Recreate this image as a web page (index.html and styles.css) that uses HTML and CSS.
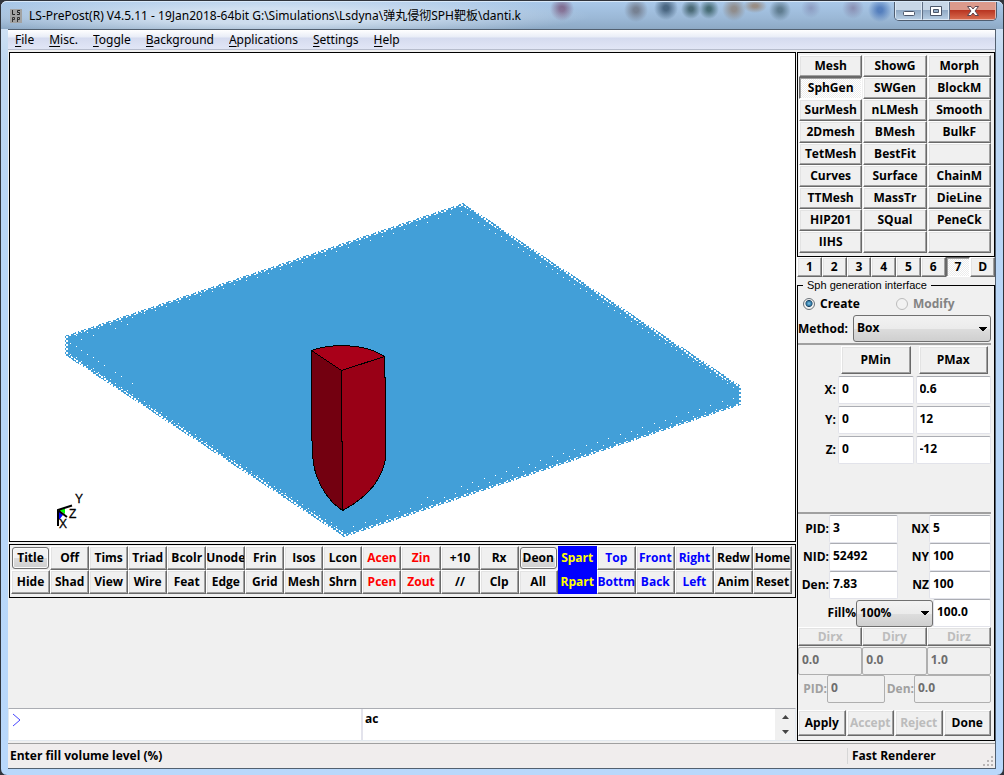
FILE: index.html
```html
<!DOCTYPE html>
<html lang="en">
<head>
<meta charset="utf-8">
<title>LS-PrePost(R) V4.5.11</title>
<link rel="stylesheet" href="styles.css">
</head>
<body>
<div class="window">
  <header class="titlebar">
    <svg class="app-icon" viewBox="0 0 12 14" aria-hidden="true">
      <rect width="12" height="14" fill="#a2a2a2"/>
      <path d="M2.500 1v4.500H5M10 1.500H7.500V3.500H9.500V5.500H7" fill="none" stroke="#222"/>
      <path d="M2.500 13V8.500h2v2h-2M7.500 13V8.500h2v2h-2" fill="none" stroke="#333"/>
    </svg>
    <h1 class="title">LS-PrePost(R) V4.5.11 - 19Jan2018-64bit G:\Simulations\Lsdyna\弹丸侵彻SPH靶板\danti.k</h1>
    <div class="window-controls">
      <button class="ctl" aria-label="Minimize"><svg width="14" height="12" viewBox="0 0 14 12"><rect x="1.500" y="6.500" width="11" height="4" rx="1" fill="#fff" stroke="#4b5669"/></svg></button>
      <button class="ctl" aria-label="Maximize"><svg width="14" height="12" viewBox="0 0 14 12"><path d="M1.500 1.500h11v9h-11zM4.500 4.500v3h5v-3z" fill="#fff" fill-rule="evenodd" stroke="#4b5669"/></svg></button>
      <button class="ctl ctl-close" aria-label="Close"><svg width="14" height="12" viewBox="0 0 14 12"><path d="M1.500 1.500h3.500l2 2.500 2-2.500h3.500L9 6l3.500 4.500H9L7 8l-2 2.500H1.500L5 6z" fill="#fff" stroke="#5d4650"/></svg></button>
    </div>
  </header>
  <div class="client">
    <nav class="menubar">
      <button><u>F</u>ile</button><button><u>M</u>isc.</button><button><u>T</u>oggle</button><button><u>B</u>ackground</button><button><u>A</u>pplications</button><button><u>S</u>ettings</button><button><u>H</u>elp</button>
    </nav>
    <main class="workspace">
      <section class="left">
        <div class="viewport">
          <svg class="scene" viewBox="10 53 785 488" preserveAspectRatio="xMidYMid slice" role="img" aria-label="Projectile above plate">
            <defs>
              <pattern id="dots" width="5" height="4" patternUnits="userSpaceOnUse" patternTransform="translate(1 2)">
                <path d="M0 0h3v2H0zM2 2h3v2H2z" fill="#429fd8"/>
              </pattern>
              <pattern id="specks" width="17" height="11" patternUnits="userSpaceOnUse">
                <path d="M2 2h1v1H2zM8 5h1v1H8zM13 9h1v1h-1z" fill="#fff"/>
              </pattern>
            </defs>
            <g shape-rendering="crispEdges">
              <path d="M463 203L741 386V405L344 537L65 355V336z" fill="url(#dots)"/>
              <path d="M463 206L738 388V404L345 534L68 354V337z" fill="#429fd8"/>
              <path d="M463 206L738 388V404L345 534L68 354V337zM463 213L72 343L344 525L732 396z" fill="url(#specks)" fill-rule="evenodd"/>
            </g>
            <g stroke="#000" stroke-linejoin="round" shape-rendering="crispEdges">
              <path d="M311.500 350.500L341.500 370.500L342.500 510.500Q326 500 317 477Q312.500 464 312.500 451L311.500 430z" fill="#730010"/>
              <path d="M384.500 356.500L341.500 370.500L342.500 510.500Q363 500 375 484Q385.500 467 385.500 457V377.500H384.500z" fill="#990016"/>
              <path d="M311.500 350.500Q324 345.500 344.500 345.500Q370 346.500 384.500 356.500L341.500 370.500z" fill="#a90019"/>
            </g>
            <path d="M59 510L65 508.500V514z" fill="#0f0"/>
            <path d="M59 511L63 515L59 520z" fill="#00f"/>
            <path d="M58 526V510L72 505.500M59 511L67 517" fill="none" stroke="#000" stroke-width="2"/>
            <g class="axis"><text x="75" y="503">Y</text><text x="69" y="518">Z</text><text x="59" y="528">X</text></g>
          </svg>
        </div>
        <div class="toolbar">
          <button class="focus">Title</button><button>Off</button><button>Tims</button><button>Triad</button><button>Bcolr</button><button>Unode</button><button>Frin</button><button>Isos</button><button>Lcon</button><button class="red">Acen</button><button class="red">Zin</button><button>+10</button><button>Rx</button><button class="focus">Deon</button><button class="part">Spart</button><button class="blue">Top</button><button class="blue">Front</button><button class="blue">Right</button><button>Redw</button><button>Home</button>
          <button>Hide</button><button>Shad</button><button>View</button><button>Wire</button><button>Feat</button><button>Edge</button><button>Grid</button><button>Mesh</button><button>Shrn</button><button class="red">Pcen</button><button class="red">Zout</button><button>//</button><button>Clp</button><button>All</button><button class="part">Rpart</button><button class="blue">Bottm</button><button class="blue">Back</button><button class="blue">Left</button><button>Anim</button><button>Reset</button>
        </div>
        <div class="console">
          <label class="prompt">
            <svg width="10" height="14" viewBox="0 0 10 14" aria-hidden="true"><path d="M1 1l7 6-7 6" fill="none" stroke="#4747ff"/></svg>
            <input aria-label="Command">
          </label>
          <textarea aria-label="Command history">ac</textarea>
          <div class="spin">
            <button aria-label="Scroll up"><svg width="7" height="4" viewBox="0 0 7 4"><path d="M0 4L3.500 0L7 4z" fill="#444"/></svg></button>
            <button aria-label="Scroll down"><svg width="7" height="4" viewBox="0 0 7 4"><path d="M0 0h7L3.500 4z" fill="#444"/></svg></button>
          </div>
        </div>
      </section>
      <aside class="right">
        <div class="pages">
          <button>Mesh</button><button>ShowG</button><button>Morph</button>
          <button class="pressed">SphGen</button><button>SWGen</button><button>BlockM</button>
          <button>SurMesh</button><button>nLMesh</button><button>Smooth</button>
          <button>2Dmesh</button><button>BMesh</button><button>BulkF</button>
          <button>TetMesh</button><button>BestFit</button><button aria-label="Empty slot"></button>
          <button>Curves</button><button>Surface</button><button>ChainM</button>
          <button>TTMesh</button><button>MassTr</button><button>DieLine</button>
          <button>HIP201</button><button>SQual</button><button>PeneCk</button>
          <button>IIHS</button><button aria-label="Empty slot"></button><button aria-label="Empty slot"></button>
        </div>
        <div class="tabs">
          <button>1</button><button>2</button><button>3</button><button>4</button><button>5</button><button>6</button><button class="pressed">7</button><button>D</button>
        </div>
        <fieldset class="panel">
          <legend>Sph generation interface</legend>
          <div class="modes">
            <label><input type="radio" name="mode" checked>Create</label>
            <label class="muted"><input type="radio" name="mode" disabled>Modify</label>
          </div>
          <div class="method">
            <label for="method">Method:</label>
            <select id="method"><option>Box</option></select>
          </div>
          <hr>
          <div class="points">
            <span></span><button>PMin</button><button>PMax</button>
            <label for="x1">X:</label><input id="x1" value="0"><input aria-label="X max" value="0.6">
            <label for="y1">Y:</label><input id="y1" value="0"><input aria-label="Y max" value="12">
            <label for="z1">Z:</label><input id="z1" value="0"><input aria-label="Z max" value="-12">
          </div>
          <hr>
          <div class="params">
            <label for="pid">PID:</label><input id="pid" value="3"><label for="nx">NX</label><input id="nx" value="5">
            <label for="nid">NID:</label><input id="nid" value="52492"><label for="ny">NY</label><input id="ny" value="100">
            <label for="den">Den:</label><input id="den" value="7.83"><label for="nz">NZ</label><input id="nz" value="100">
          </div>
          <div class="fill">
            <label for="fill">Fill%</label><select id="fill"><option>100%</option></select><input aria-label="Fill value" value="100.0">
          </div>
          <div class="dirs">
            <button disabled>Dirx</button><button disabled>Diry</button><button disabled>Dirz</button>
            <input aria-label="Dir x" value="0.0" disabled><input aria-label="Dir y" value="0.0" disabled><input aria-label="Dir z" value="1.0" disabled>
          </div>
          <div class="modify">
            <label for="mpid">PID:</label><input id="mpid" value="0" disabled><label for="mden">Den:</label><input id="mden" value="0.0" disabled>
          </div>
          <div class="actions">
            <button>Apply</button><button disabled>Accept</button><button disabled>Reject</button><button>Done</button>
          </div>
        </fieldset>
      </aside>
    </main>
    <footer class="status">
      <span>Enter fill volume level (%)</span>
      <span class="renderer">Fast Renderer</span>
      <svg class="grip" width="10" height="10" viewBox="0 0 10 10" aria-hidden="true"><path d="M8 0h2v2H8zM4 4h2v2H4zM8 4h2v2H8zM0 8h2v2H0zM4 8h2v2H4zM8 8h2v2H8z" fill="#b9b5b5"/></svg>
    </footer>
  </div>
</div>
</body>
</html>
```
FILE: styles.css
```css
* { box-sizing: border-box; }
body {
  margin: 0;
  background: #30343c;
  font: bold 12px/16px "Open Sans", "Noto Sans CJK SC", sans-serif;
  color: #000;
}
button, input, select, textarea {
  font: inherit;
  color: inherit;
  margin: 0;
  padding: 0;
  border-radius: 0;
  min-width: 0;
}
button { overflow: hidden; white-space: nowrap; }
.window {
  display: flex;
  flex-direction: column;
  min-height: 100vh;
  padding: 0 7px 6px;
  border: 1px solid #30343c;
  border-radius: 7px;
  background: linear-gradient(#dbe8f7 0, #bfd7f0 60px, #b9d6f6 200px, #b9d8fb);
}
.titlebar {
  display: flex;
  align-items: center;
  height: 28px;
  margin: 0 -7px;
  padding-left: 9px;
  border-radius: 6px 6px 0 0;
  border-top: 1px solid #d8e8f8;
  background:
    radial-gradient(ellipse 320px 22px at 270px 14px, #dfeaf6c0 35%, transparent 100%),
    radial-gradient(circle 12px at 561px 7px, #77577dcc 20%, transparent),
    radial-gradient(circle 12px at 635px 8px, #6c7280cc 20%, transparent),
    radial-gradient(circle 12px at 665px 6px, #34506acc 20%, transparent),
    radial-gradient(circle 10px at 690px 7px, #35555dcc 20%, transparent),
    radial-gradient(circle 10px at 708px 7px, #31585ccc 20%, transparent),
    radial-gradient(circle 12px at 733px 7px, #8b8078cc 20%, transparent),
    radial-gradient(ellipse 12px 7px at 754px 4px, #96806dcc 20%, transparent),
    radial-gradient(circle 11px at 779px 8px, #4f6c7dcc 20%, transparent),
    radial-gradient(circle 10px at 810px 6px, #8088b0aa, transparent),
    radial-gradient(circle 11px at 852px 6px, #7b7399aa, transparent),
    radial-gradient(circle 12px at 879px 8px, #426fb5cc 20%, transparent),
    linear-gradient(#a9c8e9, #9bb8d6 60%, #8da9c5);
}
.app-icon { width: 12px; height: 14px; margin-right: 7px; }
.title { flex: 1; margin: 0; font: 12px/16px "Noto Sans", "Noto Sans CJK SC", sans-serif; white-space: nowrap; }
.window-controls {
  display: flex;
  align-self: flex-start;
  height: 19px;
  margin-right: 6px;
  border: 1px solid #4f5d70;
  border-top: 0;
  border-radius: 0 0 5px 5px;
  overflow: hidden;
}
.ctl {
  display: flex;
  align-items: center;
  justify-content: center;
  width: 27px;
  border: 1px solid #dce8f4;
  border-top: 0;
  background: linear-gradient(#c8d7e7 45%, #91aac5 50%, #b5cce2);
}
.ctl + .ctl { border-left-color: #617086; }
.ctl-close { width: 47px; background: linear-gradient(#dc9a8c 45%, #b93622 50%, #d7694d); border-color: #e8b2a7; }
.client {
  display: flex;
  flex-direction: column;
  flex: 1;
  border: 1px solid #526070;
  border-left: 0;
  background: #f0f0f0;
}
.menubar {
  display: flex;
  gap: 15px;
  height: 20px;
  padding: 0 7px;
  border-bottom: 1px solid #b6bccc;
  background: linear-gradient(#fff, #e9edf7 7px, #d5dbef 8px, #e1e6f6);
}
.menubar button { border: 0; background: none; font: 12px/18px "Noto Sans", sans-serif; }
.menubar u { text-underline-offset: 2px; }
.workspace {
  flex: 1;
  display: grid;
  grid-template-columns: minmax(0, 1fr) 199px;
  padding: 2px 0;
}
.left { display: flex; flex-direction: column; }
.viewport {
  flex: 1;
  display: flex;
  min-height: 0;
  margin: 0 0 2px 1px;
  border: 1px solid #000;
  background: #fff;
}
.scene { flex: 1; width: 100%; height: 488px; }
.axis { font: 12px "Liberation Sans", sans-serif; fill: #000; stroke: #000; stroke-width: 0.3; }
.toolbar {
  display: grid;
  grid-template-columns: repeat(20, minmax(0, 1fr));
  grid-auto-rows: 24px;
  margin: 0 0 110px 1px;
  padding: 1px 3px 3px 1px;
  border: 1px solid #000;
}
.toolbar button, .pages button, .tabs button, .points button, .dirs button, .actions button {
  display: flex;
  align-items: center;
  justify-content: center;
  background: #f0f0f0;
  border: 1px solid;
  border-color: #fff #696969 #696969 #fff;
  box-shadow: inset -1px -1px #a0a0a0, inset 1px 1px #e3e3e3;
}
.toolbar .focus {
  margin: 1px;
  border: 1px solid #707070;
  border-radius: 3px;
  background: linear-gradient(#f2f2f2 50%, #dcdcdc 51%, #cfcfcf);
  box-shadow: inset 0 0 0 1px #fafafa;
}
.toolbar .red { color: #f00; }
.toolbar .blue { color: #00f; }
.toolbar .part { color: #ff0; background: #00f; border-color: #00f; box-shadow: none; }
.console {
  display: flex;
  height: 33px;
  border: 1px solid #e3e9ef;
  border-top-color: #abadb3;
  background: #fff;
}
.prompt { display: flex; width: 354px; padding: 4px 3px; border-right: 2px solid #e3e3ec; }
.prompt input { flex: 1; height: 20px; border: 0; outline: 0; }
.console textarea { flex: 1; padding: 2px 2px; border: 0; resize: none; overflow: hidden; outline: 0; }
.spin { display: flex; flex-direction: column; width: 20px; }
.spin button { flex: 1; display: flex; align-items: center; justify-content: center; border: 0; background: #f0f0f0; }
.right { display: flex; flex-direction: column; padding-left: 1px; }
.pages {
  display: grid;
  grid-template-columns: repeat(3, 1fr);
  grid-auto-rows: 22px;
  column-gap: 1px;
  padding: 2px 3px 3px 1px;
  border: 1px solid #000;
}
.pages .pressed, .tabs .pressed {
  border-color: #696969 #fff #fff #696969;
  box-shadow: inset 1px 1px #a0a0a0;
  background: repeating-conic-gradient(#fff 0 25%, #ececec 0 50%) 0 0 / 2px 2px;
}
.tabs { display: grid; grid-template-columns: repeat(8, 1fr); height: 20px; }
.panel {
  flex: 1;
  min-width: 0;
  margin: 2px 0 0;
  padding: 0 3px 3px 0;
  border: 1px solid #000;
}
.panel legend { margin-left: 5px; padding: 0 4px; font: 11px/12px "Liberation Sans", sans-serif; }
.modes { display: grid; grid-template-columns: 93px 1fr; height: 24px; align-items: center; padding: 2px 0 0 5px; }
.modes label { display: flex; align-items: center; gap: 5px; }
.modes input {
  appearance: none;
  width: 12px;
  height: 12px;
  border: 1px solid #6b7279;
  border-radius: 50%;
  background: #f2f2f2;
}
.modes input:checked { background: radial-gradient(circle at 50% 45%, #7fc9ee 0, #1b5d89 3px, #123c5c 3px, #f2f2f2 4px); }
.modes input:disabled { border-color: #bcbcbc; }
.muted { color: #838383; }
.method { display: flex; align-items: center; gap: 5px; height: 27px; }
.method select { flex: 1; }
select {
  appearance: none;
  height: 27px;
  padding: 0 3px 1px;
  border: 1px solid #707070;
  border-radius: 3px;
  background:
    linear-gradient(to bottom left, #000 50%, transparent 51%) right 7px center / 4px 4px no-repeat,
    linear-gradient(to bottom right, #000 50%, transparent 51%) right 3px center / 4px 4px no-repeat,
    linear-gradient(#f2f2f2, #ebebeb 50%, #ddd 51%, #cfcfcf);
}
hr { height: 2px; margin: 1px 0; border: 0; background: #a0a0a0; }
.panel input:not([type="radio"]) {
  width: 100%;
  height: 28px;
  padding: 0 3px 4px;
  border: 1px solid #e2e3ea;
  border-top-color: #abadb3;
  border-radius: 2px;
  background: #fff;
}
.points {
  display: grid;
  grid-template-columns: 38px 1fr 1fr;
  grid-auto-rows: 28px;
  gap: 2px;
  height: 165px;
  align-content: start;
}
.points button { margin: 0 3px; }
.points label { text-align: right; align-self: center; }
.params { display: grid; grid-template-columns: 31px 69px 1fr 62px; grid-auto-rows: 28px; align-items: center; }
.params label { text-align: right; }
.fill { display: grid; grid-template-columns: 1fr 77px 58px; height: 28px; align-items: center; }
.fill label { text-align: right; }
.dirs { display: grid; grid-template-columns: repeat(3, 1fr); grid-template-rows: 19px 28px; row-gap: 1px; }
button:disabled { color: #bcbcbc; }
.panel .dirs input, .panel .modify input { color: #6d6d6d; background: #f0f0f0; border-color: #afafaf; }
.modify { display: grid; grid-template-columns: 29px 58px 29px 1fr; align-items: center; color: #a0a0a0; }
.modify label { text-align: right; }
.actions { display: grid; grid-template-columns: repeat(4, 1fr); grid-auto-rows: 26px; gap: 1px; margin-top: 7px; }
.status {
  display: grid;
  grid-template-columns: minmax(0, 1fr) 148px;
  position: relative;
  height: 25px;
  padding-left: 2px;
  align-items: center;
  border-top: 1px solid #a0a0a0;
  background: #f0eded;
}
.renderer { padding-left: 4px; border-left: 1px solid #d7d7d7; }
.grip { position: absolute; right: 2px; bottom: 2px; }
```
